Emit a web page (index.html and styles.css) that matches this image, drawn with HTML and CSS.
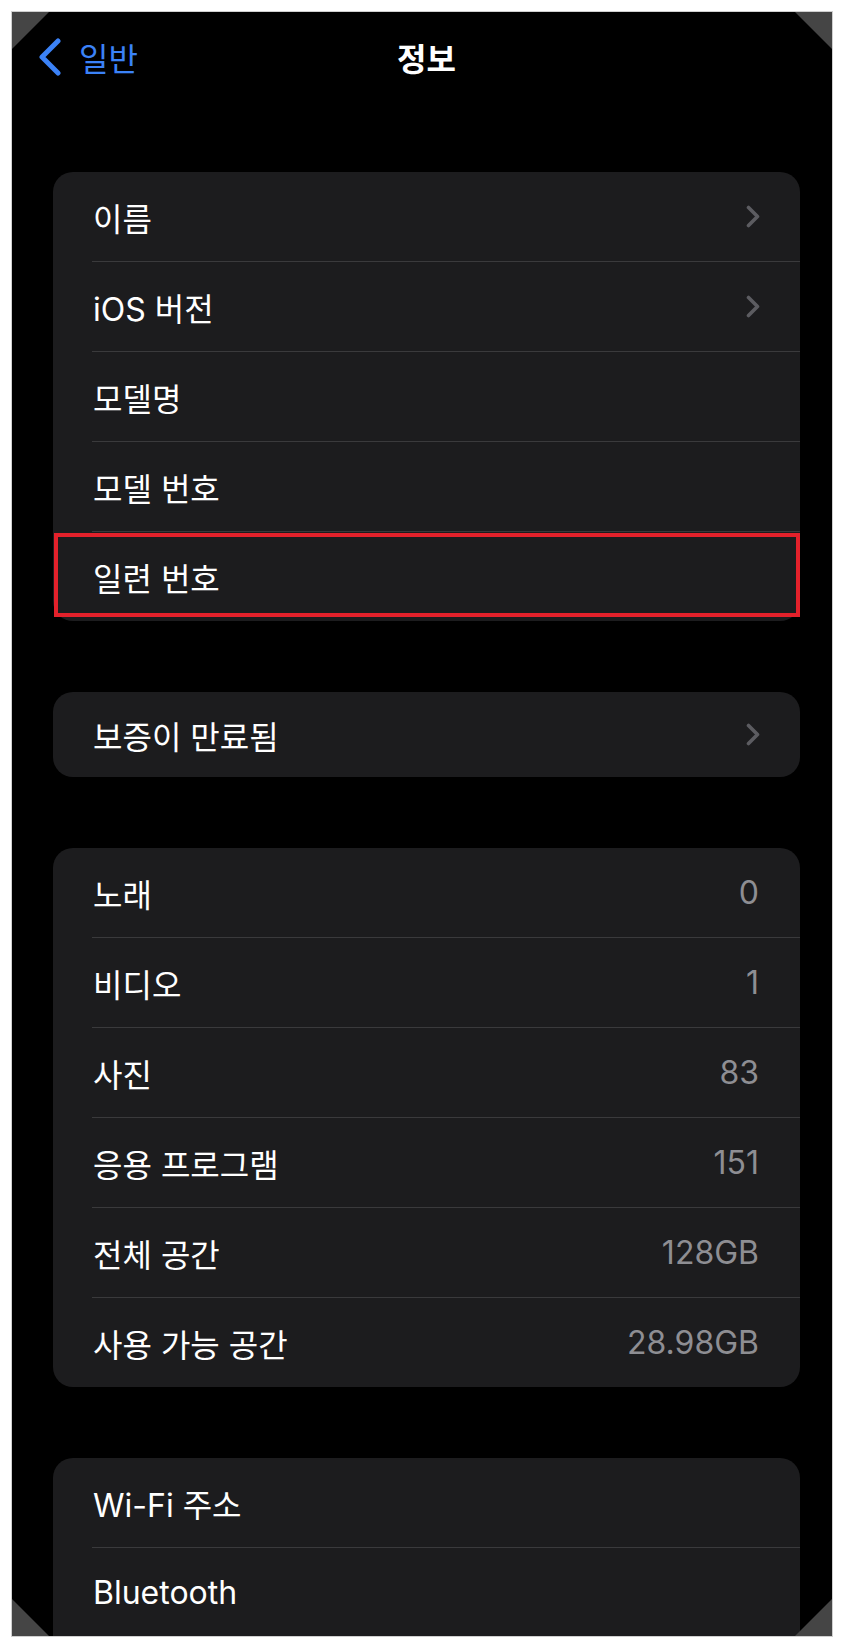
FILE: index.html
```html
<!DOCTYPE html>
<html lang="ko">
<head>
  <meta charset="UTF-8">
  <meta name="viewport" content="width=device-width, initial-scale=1.0">
  <title>정보</title>
  <link rel="stylesheet" href="styles.css">
</head>
<body>
  <div class="frame">
    <!-- corner marks -->
    <span class="corner tl"></span>
    <span class="corner tr"></span>
    <span class="corner bl"></span>
    <span class="corner br"></span>

    <div class="screen">
      <!-- Nav bar -->
      <div class="navbar">
        <div class="back">
          <svg class="back-icon" width="22" height="38" viewBox="0 0 22 38">
            <polyline points="19,3 3,19 19,35" fill="none" stroke="#3b82f7" stroke-width="5" stroke-linecap="round" stroke-linejoin="round"/>
          </svg>
          <span>일반</span>
        </div>
        <h1 class="title">정보</h1>
        <div></div>
      </div>

      <div class="groups">
        <div class="group">
          <div class="row"><span>이름</span><span class="chevron"></span></div>
          <div class="row"><span>iOS 버전</span><span class="chevron"></span></div>
          <div class="row"><span>모델명</span></div>
          <div class="row"><span>모델 번호</span></div>
          <div class="row marked"><span>일련 번호</span></div>
        </div>

        <div class="group">
          <div class="row short"><span>보증이 만료됨</span><span class="chevron"></span></div>
        </div>

        <div class="group">
          <div class="row"><span>노래</span><span class="value">0</span></div>
          <div class="row"><span>비디오</span><span class="value">1</span></div>
          <div class="row"><span>사진</span><span class="value">83</span></div>
          <div class="row"><span>응용 프로그램</span><span class="value">151</span></div>
          <div class="row"><span>전체 공간</span><span class="value">128GB</span></div>
          <div class="row"><span>사용 가능 공간</span><span class="value">28.98GB</span></div>
        </div>

        <!-- runs on past the bottom of the screenshot -->
        <div class="group cut">
          <div class="row"><span>Wi-Fi 주소</span></div>
          <div class="row"><span>Bluetooth</span></div>
        </div>
      </div>
    </div>
  </div>

  <template id="chevron-tpl">
    <svg width="14" height="23" viewBox="0 0 14 23">
      <polyline points="2.5,2.5 11.5,11.5 2.5,20.5" fill="none" stroke="#5c5c61" stroke-width="3.6" stroke-linecap="round" stroke-linejoin="round"/>
    </svg>
  </template>

  <script>
    // fill every chevron slot with the same svg
    const tpl = document.getElementById('chevron-tpl');
    document.querySelectorAll('.chevron').forEach(el => {
      el.appendChild(tpl.content.cloneNode(true));
    });
  </script>
</body>
</html>
```

FILE: styles.css
```css
body {
  margin: 0;
  background: #fff;
  font-family: "Inter", "Noto Sans CJK KR", sans-serif;
}

/* Screenshot frame */
.frame {
  position: relative;
  margin: 11px 0 0 11px;
  width: 820px;
  height: 1624px;
  border: 1px solid #cfcfcf;
  background: #000;
  overflow: hidden;
}

.corner {
  position: absolute;
  width: 37px;
  height: 37px;
  background: #454545;
  z-index: 2;
}

.corner.tl { top: 0; left: 0; clip-path: polygon(0 0, 100% 0, 0 100%); }
.corner.tr { top: 0; right: 0; clip-path: polygon(0 0, 100% 0, 100% 100%); }
.corner.bl { bottom: 0; left: 0; clip-path: polygon(0 0, 100% 100%, 0 100%); }
.corner.br { bottom: 0; right: 0; clip-path: polygon(100% 0, 100% 100%, 0 100%); }

.screen {
  width: 829px;
  color: #fff;
}

/* Nav bar */
.navbar {
  display: grid;
  grid-template-columns: 1fr auto 1fr;
  align-items: center;
  height: 90px;
}

.back {
  display: flex;
  align-items: center;
  gap: 18px;
  padding-left: 27px;
  color: #3b82f7;
  font-size: 32px;
}

.back-icon {
  display: block;
}

.title {
  margin: 0;
  font-size: 32px;
  font-weight: 700;
}

/* Grouped list */
.groups {
  display: flex;
  flex-direction: column;
  gap: 71px;
  padding: 70px 41px 0;
}

.group {
  background: #1c1c1e;
  border-radius: 20px;
}

.group.cut {
  padding-bottom: 60px;
}

.row {
  position: relative;
  display: flex;
  align-items: center;
  justify-content: space-between;
  height: 89px;
  padding: 0 41px 0 40px;
  font-size: 32px;
}

.row.short {
  height: 85px;
}

.row + .row {
  margin-top: 1px;
}

.row + .row::before {
  content: "";
  position: absolute;
  top: -1px;
  left: 39px;
  right: 0;
  height: 1px;
  background: #3a3a3c;
}

.value {
  color: #8e8e93;
}

.chevron svg {
  display: block;
  margin-right: -1px;
}

/* highlight box drawn over the serial number row */
.row.marked::after {
  content: "";
  position: absolute;
  top: 1px;
  left: 1px;
  right: 0;
  height: 84px;
  border: 4px solid #e3212b;
  box-sizing: border-box;
}
```
